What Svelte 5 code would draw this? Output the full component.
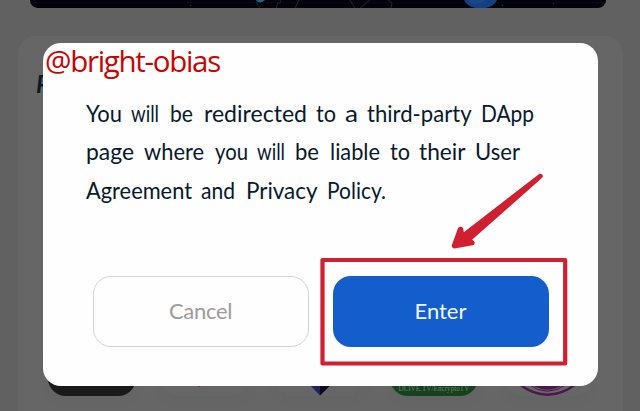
<script>
  const lines = [
    { y: 24.5, words: [['You', 0, 36], ['will', 45, 28], ['be', 84, 23], ['redirected', 118, 103], ['to', 230, 20], ['a', 259, 13], ['third-party', 281, 104], ['DApp', 395, 53]] },
    { y: 63, words: [['page', 0, 48], ['where', 58, 60], ['you', 129, 33], ['will', 171, 28], ['be', 209, 24], ['liable', 244, 50], ['to', 304, 20], ['their', 333, 46], ['User', 389, 45]] },
    { y: 101.5, words: [['Agreement', 0, 106], ['and', 115, 34], ['Privacy', 160, 71], ['Policy.', 241, 59]] }
  ];
</script>

<main class="screen">
  <div class="banner">
    <svg width="576" height="8" viewBox="30 0 576 8">
      <path d="M30 2.8H606" stroke="#06063a" stroke-width="1" />
      <path d="M256 0h9q-2 2-5 2.5Q257 2 256 0Z" fill="#22607f" />
      <path d="M256 2l4 6M276 8l2-5 3-1-1-2M299 0l-4 8M350 0l5 8M370 0l-10 8M388 0l4 3-1 5" fill="none" stroke="#252628" />
      <ellipse cx="480.500" cy="-3" rx="17" ry="11.500" fill="#153f82" />
      <ellipse cx="477" cy="0" rx="8" ry="4" fill="#174988" />
      <path d="M190 5.500h1M502 5.500h1M553 3.500h1" stroke="#343434" />
    </svg>
  </div>
  <section class="panel">
    <span class="heading">P</span>
    <div class="apps">
      <div class="app black"></div>
      <div class="app"><svg viewBox="0 0 88 38"><path d="M34.500 27h4.500l-2 2z" fill="#7c092c" /></svg></div>
      <div class="app"><svg viewBox="0 0 88 38"><path d="M33 26H55.500L44 37.500Z" fill="#20235b" /><path d="M44 26H55.500L44 37.500Z" fill="#070b22" /></svg></div>
      <div class="app green"><span>DLIVE.TV/EncryptoTV</span></div>
      <div class="app"><svg viewBox="0 0 88 38"><path d="M15 26Q43.500 47.500 72 26" fill="none" stroke="#4c174d" stroke-width="2.200" /><path d="M24 26Q43.500 40.500 63 26" fill="none" stroke="#4c174d" stroke-width="1" /><path d="M27 26H60Q43.500 37.500 27 26" fill="#4c174d" /></svg></div>
    </div>
  </section>

  <div class="dialog" role="dialog">
    <div class="watermark">@bright-obias</div>
    <svg class="message" width="460" height="116" viewBox="0 0 460 116">
      {#each lines as line}
        <text y={line.y}>
          {#each line.words as [word, x, width]}
            <tspan {x} textLength={width} lengthAdjust="spacingAndGlyphs">{word}</tspan>{' '}
          {/each}
        </text>
      {/each}
    </svg>
    <div class="actions">
      <button class="cancel">Cancel</button>
      <button class="enter">Enter</button>
    </div>
  </div>

  <svg class="marks" width="640" height="411" viewBox="0 0 640 411">
    <rect x="322.500" y="260" width="242.700" height="103.500" fill="none" stroke="#cf1f30" stroke-width="4.200" stroke-linejoin="round" />
    <path d="M539.200 174C541.800 172.800 544 175.600 542.200 177.800L472 239.800C475.600 241.500 475.200 244.500 472.600 245.200L454.500 248.600C452.200 248.500 451.400 246.500 452 244.700L458 228.200C459.200 225.900 462.500 226.300 463.200 228.500L463.800 232.300Z" fill="#cf1f30" />
  </svg>
</main>

<style>
  :global(body) { margin: 0; overflow: hidden; }
  * { box-sizing: border-box; }
  .screen { position: relative; width: 640px; height: 411px; overflow: hidden; background: #616161; font-family: Lato, sans-serif; }
  .banner { width: 576px; height: 8px; margin-left: 30px; overflow: hidden; background: #020204; border-radius: 0 0 9px 9px; }
  .banner svg { display: block; }
  .panel { width: 605px; height: 375px; margin: 28px 0 0 18px; background: #666; border-radius: 18px 18px 0 0; display: flex; flex-direction: column; justify-content: space-between; }
  .heading { margin: 38px 0 0 18px; font: italic 700 24px/20px Lato, sans-serif; color: #0b1925; }
  .apps { height: 53px; padding-left: 30px; display: flex; gap: 26px; }
  .app { width: 88px; height: 38px; flex: none; overflow: hidden; border-radius: 0 0 18px 18px; box-shadow: 0 4px 7px #60616466; }
  .app svg { display: block; width: 88px; height: 38px; }
  .black { background: #191919; }
  .green { background: #17401f; padding-top: 26px; text-align: center; font: 7.200px/10px "Liberation Serif", serif; color: #68846b; }
  .green span { white-space: nowrap; }
  .dialog { position: absolute; left: 42.500px; top: 42.500px; width: 555px; height: 343px; display: flex; flex-direction: column; background: #fefefe; border-radius: 18px; }
  .watermark { height: 30px; margin-top: 3px; padding-left: 2.500px; font: 29.500px/30px "Open Sans", sans-serif; letter-spacing: -1.300px; color: #c60506; white-space: nowrap; }
  .message { height: 116px; margin: 21px 0 0 43.500px; overflow: visible; }
  .message text { fill: #07192a; font-size: 24px; }
  .actions { display: flex; gap: 24px; margin: 63px 0 0 50px; }
  button { width: 216px; height: 71px; padding: 0; border-radius: 18px; font: 22px/28px Lato, sans-serif; }
  .cancel { border: 1.500px solid #d3d3d3; background: #fefefe; color: #9b9b9b; letter-spacing: -.3px; }
  .enter { border: 0; background: #145dcd; color: #f2f7ff; }
  .marks { position: absolute; inset: 0; pointer-events: none; }
</style>
